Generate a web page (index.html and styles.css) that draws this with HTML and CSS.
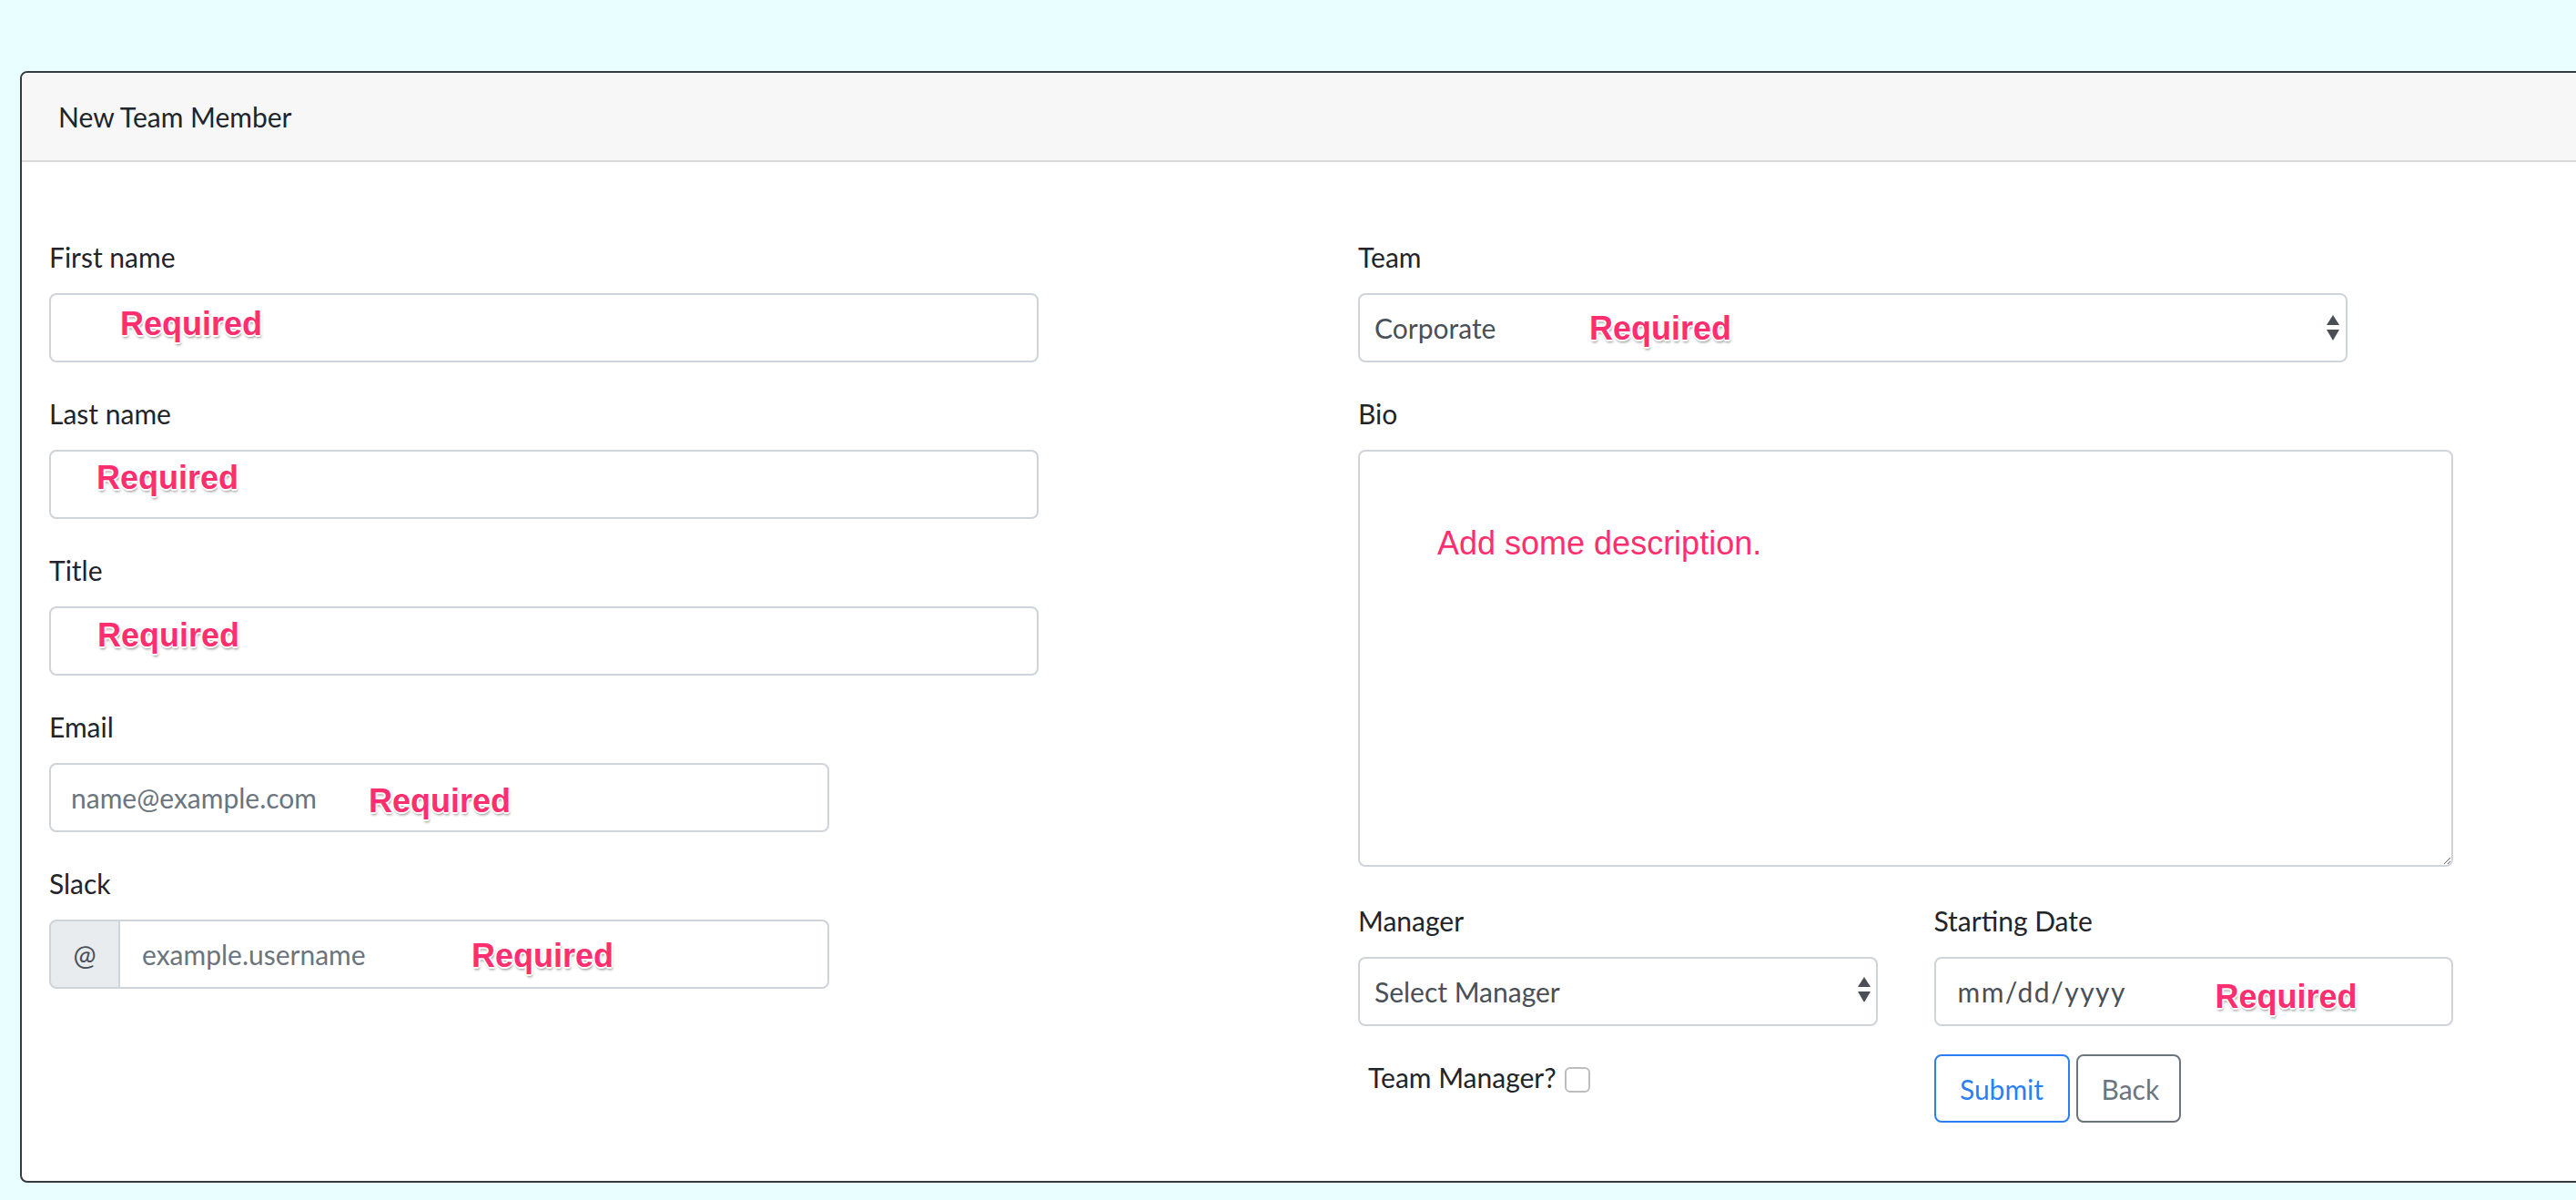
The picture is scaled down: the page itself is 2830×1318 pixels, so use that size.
FILE: index.html
```html
<!DOCTYPE html>
<html lang="en">
<head>
<meta charset="utf-8">
<title>New Team Member</title>
<link rel="stylesheet" href="styles.css">
</head>
<body>
<div class="card">
  <div class="card-header">New Team Member</div>
  <form class="card-body">
    <div class="col col-left">
      <div class="group">
        <label class="lbl">First name</label>
        <div class="field w-full">
          <input class="control" type="text">
          <span class="req req-first">Required</span>
        </div>
      </div>
      <div class="group">
        <label class="lbl">Last name</label>
        <div class="field w-full">
          <input class="control" type="text">
          <span class="req req-last">Required</span>
        </div>
      </div>
      <div class="group">
        <label class="lbl">Title</label>
        <div class="field w-full">
          <input class="control" type="text">
          <span class="req req-title">Required</span>
        </div>
      </div>
      <div class="group">
        <label class="lbl">Email</label>
        <div class="field w-short">
          <input class="control" type="email" placeholder="name@example.com">
          <span class="req req-email">Required</span>
        </div>
      </div>
      <div class="group">
        <label class="lbl">Slack</label>
        <div class="field w-short input-group">
          <span class="addon">@</span>
          <input class="control control-grouped" type="text" placeholder="example.username">
          <span class="req req-slack">Required</span>
        </div>
      </div>
    </div>

    <div class="col col-right">
      <div class="group">
        <label class="lbl">Team</label>
        <div class="field w-full">
          <select class="control select">
            <option>Corporate</option>
          </select>
          <svg class="arrows arrows-team" viewBox="0 0 14 28" width="14" height="28"><polygon points="7,0 14,11 0,11"/><polygon points="0,16 14,16 7,28"/></svg>
          <span class="req req-team">Required</span>
        </div>
      </div>
      <div class="group">
        <label class="lbl">Bio</label>
        <div class="field w-bio">
          <textarea class="control textarea"></textarea>
          <span class="desc">Add some description.</span>
        </div>
      </div>
      <div class="split">
        <div class="group-nomargin">
          <label class="lbl">Manager</label>
          <div class="field">
            <select class="control select">
              <option>Select Manager</option>
            </select>
            <svg class="arrows arrows-manager" viewBox="0 0 14 28" width="14" height="28"><polygon points="7,0 14,11 0,11"/><polygon points="0,16 14,16 7,28"/></svg>
          </div>
          <div class="check-row">
            <label class="check-label">Team Manager?<input class="check" type="checkbox"></label>
          </div>
        </div>
        <div class="group-nomargin">
          <label class="lbl">Starting Date</label>
          <div class="field">
            <input class="control control-date" type="text" placeholder="mm/dd/yyyy">
            <span class="req req-date">Required</span>
          </div>
          <div class="buttons">
            <button class="btn btn-primary" type="submit">Submit</button>
            <button class="btn btn-secondary" type="button">Back</button>
          </div>
        </div>
      </div>
    </div>
  </form>
</div>
</body>
</html>
```

FILE: styles.css
```css
html, body {
  margin: 0;
  padding: 0;
}
body {
  background: #e9fefe;
  overflow: hidden;
  font-family: Lato, "Open Sans", sans-serif;
  font-size: 30px;
  color: #212529;
}
.card {
  margin: 78px 0 0 22px;
  width: 2900px;
  border: 2px solid #343a40;
  border-radius: 8px;
  background: #fff;
  overflow: hidden;
}
.card-header {
  background: #f7f7f7;
  border-bottom: 2px solid #d9d9d9;
  padding: 24px 40px;
  line-height: 48px;
}
.card-body {
  display: grid;
  grid-template-columns: 1438px 1203px;
  align-items: start;
  padding: 80px 30px 64px 30px;
  margin: 0;
}
.group {
  margin-bottom: 32px;
}
.col-right .group:nth-child(2) {
  margin-bottom: 35px;
}
.lbl {
  display: block;
  line-height: 48px;
  margin-bottom: 16px;
  color: #212529;
}
.field {
  position: relative;
}
.w-full { width: 1087px; }
.w-short { width: 857px; }
.w-bio { width: 1203px; }

.control {
  display: block;
  box-sizing: border-box;
  width: 100%;
  height: 76px;
  margin: 0;
  padding: 0 22px;
  border: 2px solid #ced4da;
  border-radius: 8px;
  background: #fff;
  font-family: Lato, "Open Sans", sans-serif;
  font-size: 30px;
  line-height: 48px;
  color: #495057;
  outline: none;
}
.control::placeholder {
  color: #6c757d;
  opacity: 1;
}
.control-date {
  padding-left: 24px;
  letter-spacing: 1.5px;
}
.control-date::placeholder {
  color: #495057;
}
.select {
  -webkit-appearance: none;
  appearance: none;
  padding: 0 40px 0 16px;
}
.textarea {
  height: 458px;
  resize: vertical;
  padding: 12px 22px;
}
.arrows {
  position: absolute;
  fill: #4a4f56;
  pointer-events: none;
}
.arrows-team { right: 9px; top: 24px; }
.arrows-manager { right: 8px; top: 22px; }

.input-group {
  display: flex;
}
.addon {
  box-sizing: border-box;
  width: 78px;
  height: 76px;
  flex: none;
  display: flex;
  align-items: center;
  justify-content: center;
  background: #e9ecef;
  border: 2px solid #ced4da;
  border-radius: 8px 0 0 8px;
  color: #495057;
  line-height: 48px;
}
.control-grouped {
  flex: 1;
  border-left: none;
  border-radius: 0 8px 8px 0;
  padding-left: 24px;
}

.split {
  display: grid;
  grid-template-columns: 1fr 1fr;
  column-gap: 62px;
}
.check-row {
  margin-top: 32px;
  padding-left: 11px;
  line-height: 48px;
}
.check-label {
  color: #212529;
}
.check {
  -webkit-appearance: none;
  appearance: none;
  box-sizing: border-box;
  width: 28px;
  height: 28px;
  margin: 0 0 0 9px;
  border: 2px solid #bdbdbd;
  border-radius: 6px;
  background: #fff;
  vertical-align: -5px;
}
.buttons {
  display: flex;
  gap: 7px;
  margin-top: 31px;
}
.btn {
  box-sizing: border-box;
  height: 75px;
  padding: 0 26px;
  border: 2px solid;
  border-radius: 8px;
  background: #fff;
  font-family: Lato, "Open Sans", sans-serif;
  font-size: 30px;
  line-height: 48px;
}
.btn-primary {
  color: #2b7ff2;
  border-color: #2b7ff2;
  width: 149px;
}
.btn-secondary {
  color: #6c757d;
  border-color: #6c757d;
  width: 115px;
}

.req {
  position: absolute;
  font-family: "Liberation Sans", Arial, sans-serif;
  font-weight: bold;
  font-size: 36px;
  line-height: 36px;
  color: #ff2e6e;
  white-space: nowrap;
  pointer-events: none;
  text-shadow:
    2px 0 0 #fff, -2px 0 0 #fff, 0 2px 0 #fff, 0 -2px 0 #fff,
    1px 1px 0 #fff, -1px 1px 0 #fff, 1px -1px 0 #fff, -1px -1px 0 #fff,
    1px 3px 3px rgba(0, 0, 0, 0.45);
}
.req-first { left: 78px; top: 16px; }
.req-last { left: 52px; top: 13px; }
.req-title { left: 53px; top: 14px; }
.req-email { left: 351px; top: 24px; }
.req-slack { left: 464px; top: 22px; }
.req-team { left: 254px; top: 21px; }
.req-date { left: 309px; top: 26px; }
.desc {
  position: absolute;
  left: 87px;
  top: 85px;
  font-family: "Liberation Sans", Arial, sans-serif;
  font-size: 36px;
  line-height: 36px;
  color: #ff2e6e;
  white-space: nowrap;
  pointer-events: none;
}
```
